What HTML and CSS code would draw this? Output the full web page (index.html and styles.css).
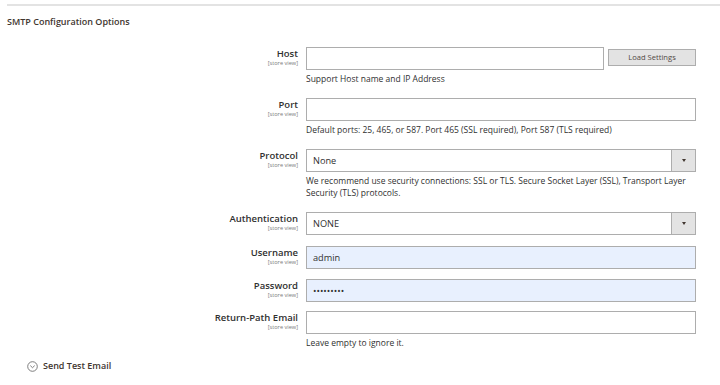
FILE: index.html
```html
<!DOCTYPE html>
<html lang="en">
<head>
    <meta charset="UTF-8">
    <meta name="viewport" content="width=device-width, initial-scale=1.0">
    <title>SMTP Configuration</title>
    <link rel="stylesheet" href="styles.css">
</head>
<body>
    <div class="rule"></div>
    <h2 class="section-title">SMTP Configuration Options</h2>
    <div class="config">
        <div class="row">
            <div class="label"><span>Host</span><small>[store view]</small></div>
            <div class="value">
                <div class="with-button">
                    <input class="field" type="text">
                    <button class="load">Load Settings</button>
                </div>
                <p class="note">Support Host name and IP Address</p>
            </div>
        </div>
        <div class="row">
            <div class="label"><span>Port</span><small>[store view]</small></div>
            <div class="value">
                <input class="field" type="text">
                <p class="note">Default ports: 25, 465, or 587. Port 465 (SSL required), Port 587 (TLS required)</p>
            </div>
        </div>
        <div class="row">
            <div class="label"><span>Protocol</span><small>[store view]</small></div>
            <div class="value">
                <div class="select">
                    <select class="field">
                        <option>None</option>
                        <option>SSL</option>
                        <option>TLS</option>
                    </select>
                </div>
                <p class="note">We recommend use security connections: SSL or TLS. Secure Socket Layer (SSL), Transport Layer Security (TLS) protocols.</p>
            </div>
        </div>
        <div class="row">
            <div class="label"><span>Authentication</span><small>[store view]</small></div>
            <div class="value">
                <div class="select">
                    <select class="field">
                        <option>NONE</option>
                        <option>LOGIN</option>
                        <option>PLAIN</option>
                    </select>
                </div>
            </div>
        </div>
        <div class="row">
            <div class="label"><span>Username</span><small>[store view]</small></div>
            <div class="value">
                <input class="field filled" type="text" value="admin">
            </div>
        </div>
        <div class="row">
            <div class="label"><span>Password</span><small>[store view]</small></div>
            <div class="value">
                <input class="field filled" type="password" value="secretpwd">
            </div>
        </div>
        <div class="row">
            <div class="label"><span>Return-Path Email</span><small>[store view]</small></div>
            <div class="value">
                <input class="field" type="text">
                <p class="note">Leave empty to ignore it.</p>
            </div>
        </div>
    </div>
    <div class="toggle">
        <svg width="11" height="11" viewBox="0 0 11 11"><circle cx="5.5" cy="5.5" r="4.8" fill="none" stroke="#6f6f6f" stroke-width="0.9"/><path d="M3.3 4.6 L5.5 6.7 L7.7 4.6" fill="none" stroke="#6f6f6f" stroke-width="0.9"/></svg>
        <span>Send Test Email</span>
    </div>
</body>
</html>
```

FILE: styles.css
```css
body, html {
    margin: 0;
    padding: 0;
    background: #ffffff;
    font-family: "Open Sans", "DejaVu Sans", sans-serif;
    color: #303030;
}
.rule {
    height: 2px;
    margin: 4px 0 0 7px;
    background-color: #e3e3e3;
}
.section-title {
    margin: 10px 0 0 7px;
    font-size: 9px;
    line-height: 12px;
    font-weight: 600;
    color: #41362f;
}
.config {
    margin-top: 19px;
}
.row {
    display: grid;
    grid-template-columns: 298px 390px;
    column-gap: 8px;
    margin-bottom: 11px;
}
.row:nth-child(5) {
    margin-bottom: 10px;
}
.row:nth-child(6) {
    margin-bottom: 9px;
}
.row:last-child {
    margin-bottom: 0;
}
.label {
    text-align: right;
    padding-top: 1px;
}
.label span {
    display: block;
    font-size: 9.5px;
    line-height: 12px;
    font-weight: 600;
    color: #303030;
}
.label small {
    display: block;
    font-size: 5.6px;
    line-height: 7px;
    color: #7a7a7a;
}
.field {
    display: block;
    width: 100%;
    height: 23px;
    box-sizing: border-box;
    margin: 0;
    padding: 0 6px;
    border: 1px solid #adadad;
    border-radius: 0;
    background-color: #ffffff;
    font-family: "Open Sans", "DejaVu Sans", sans-serif;
    font-size: 9.2px;
    color: #303030;
    outline: none;
}
.filled {
    background-color: #e8f0fe;
}
.with-button {
    display: flex;
    align-items: center;
    gap: 4px;
}
.with-button .field {
    flex: 1;
}
.load {
    width: 88px;
    height: 17px;
    margin-top: -3px;
    padding: 0;
    border: 1px solid #adadad;
    border-radius: 0;
    background-color: #e3e3e3;
    font-family: "Open Sans", "DejaVu Sans", sans-serif;
    font-size: 7.6px;
    color: #514943;
}
.select {
    position: relative;
}
.select select {
    -webkit-appearance: none;
    appearance: none;
}
.select::after {
    content: "";
    position: absolute;
    top: 1px;
    right: 1px;
    width: 23px;
    height: 21px;
    border-left: 1px solid #adadad;
    background-color: #e3e3e3;
    pointer-events: none;
}
.select::before {
    content: "";
    position: absolute;
    z-index: 1;
    top: 10px;
    right: 10px;
    border-left: 2.5px solid transparent;
    border-right: 2.5px solid transparent;
    border-top: 3px solid #41362f;
    pointer-events: none;
}
.note {
    margin: 3px 0 2px;
    font-size: 8.5px;
    line-height: 12px;
    color: #303030;
}
.toggle {
    display: flex;
    align-items: center;
    gap: 5px;
    margin: 8px 0 0 27px;
    font-size: 9px;
    line-height: 14px;
    font-weight: 600;
    color: #41362f;
}
.toggle svg {
    display: block;
}
```
